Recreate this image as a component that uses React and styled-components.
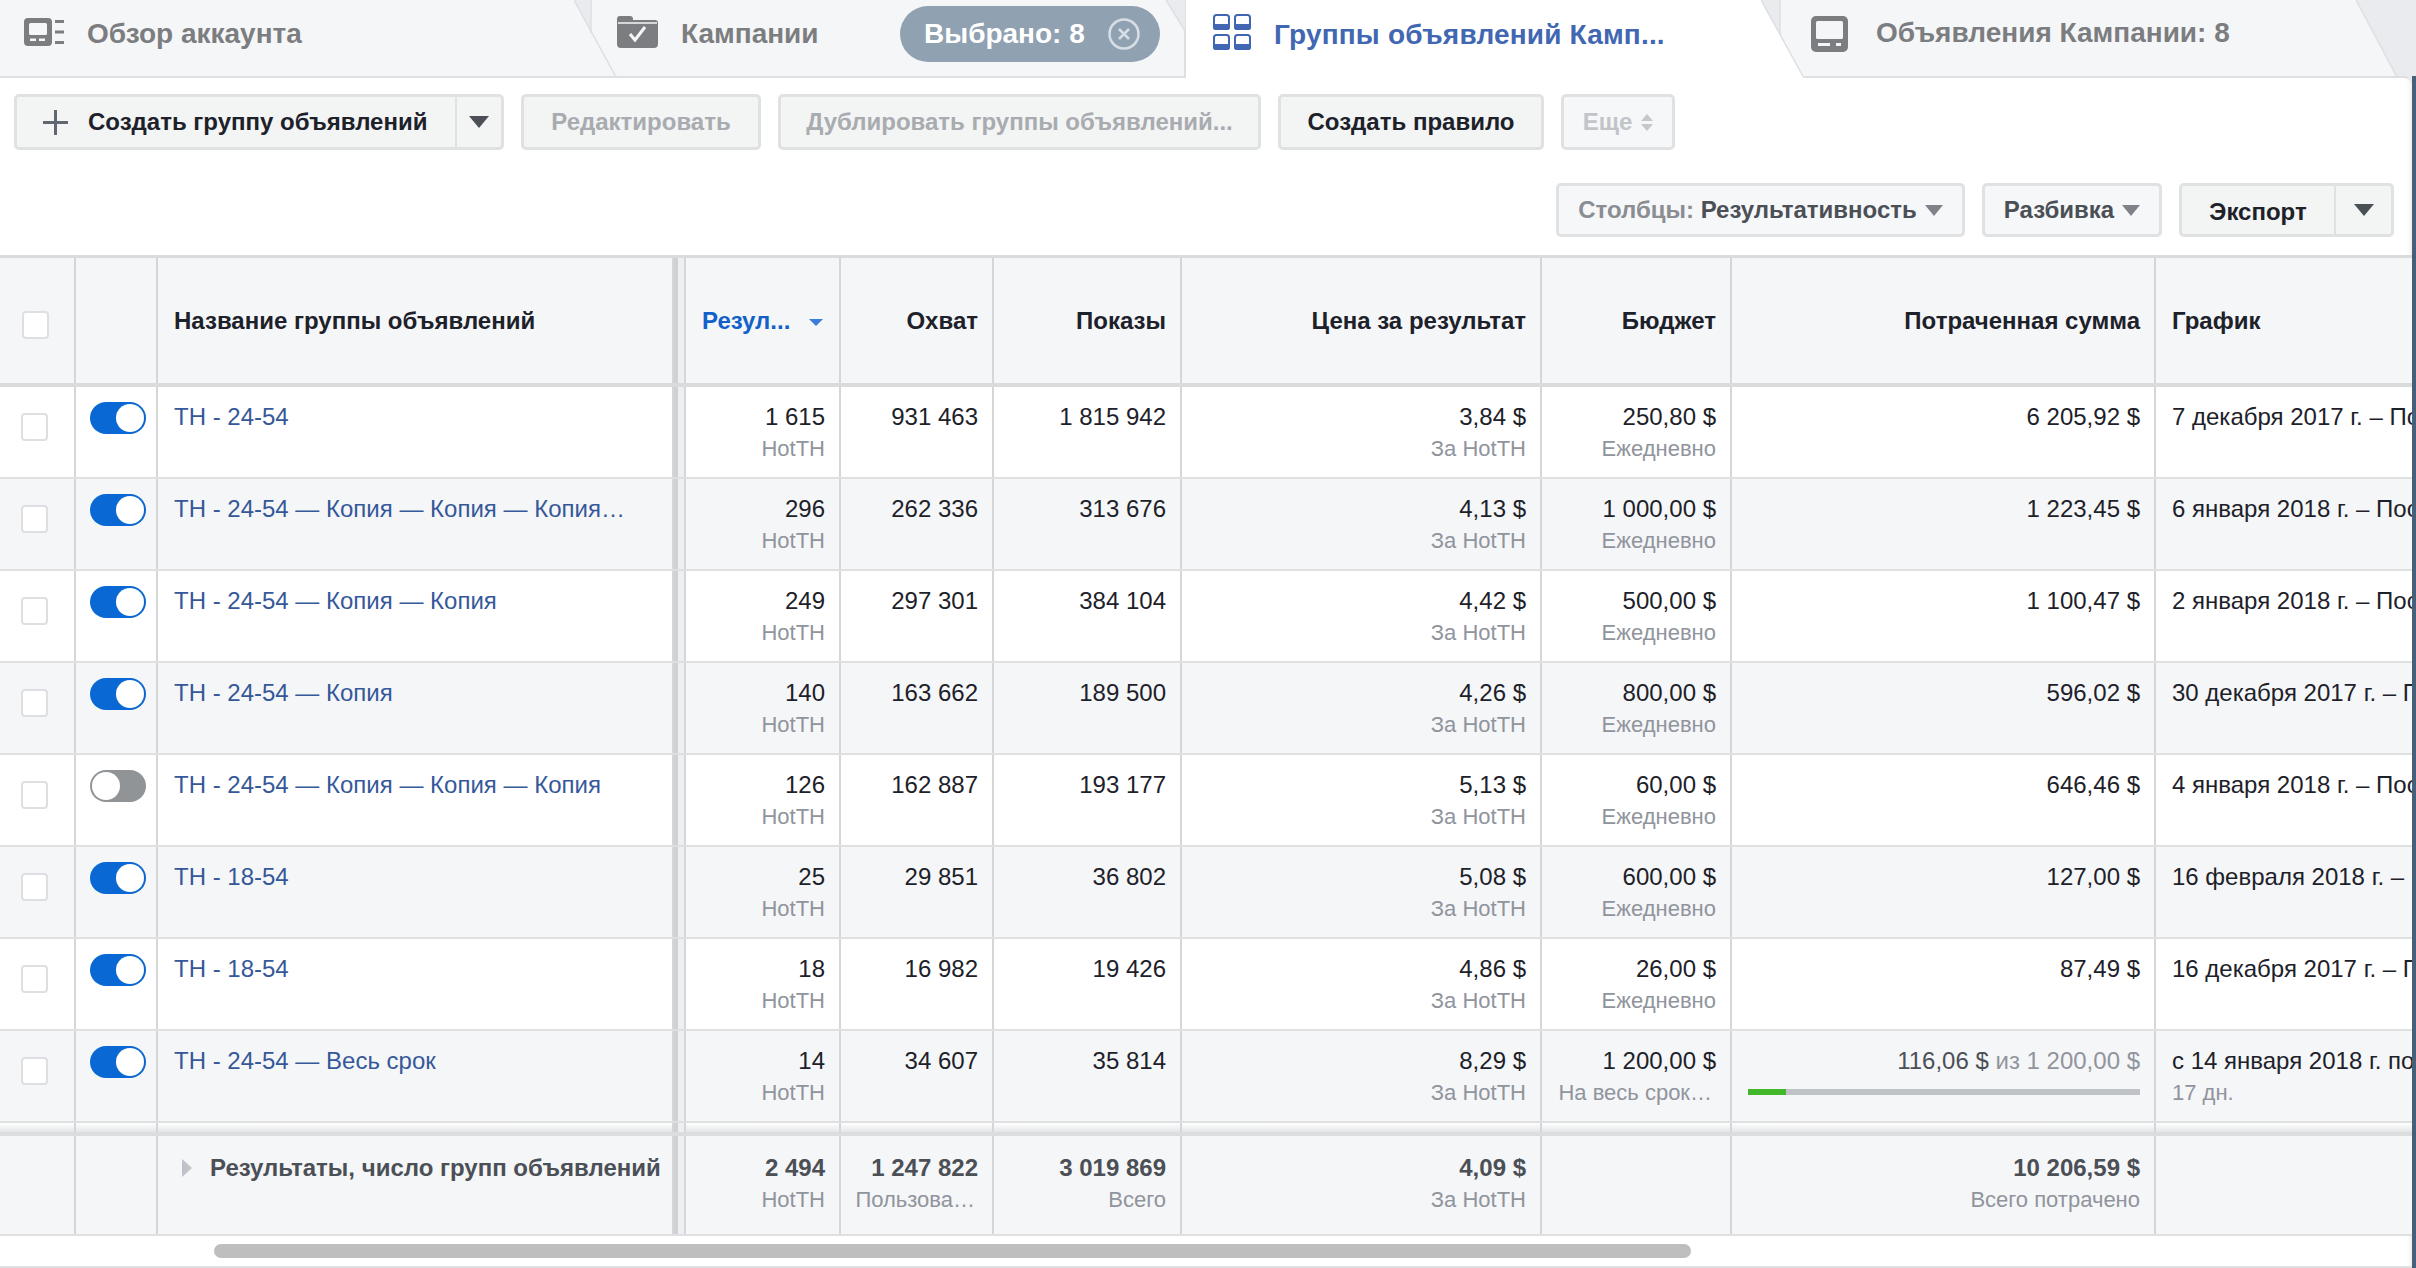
import React from "react";
import styled, { createGlobalStyle } from "styled-components";

const GlobalStyle = createGlobalStyle`
  html, body { margin: 0; padding: 0; background: #e9ebee; }
  body { font-family: "Liberation Sans", Arial, sans-serif; }
  * { box-sizing: border-box; }
`;

const COLUMNS = "76px 82px 516px 12px 155px 153px 188px 360px 190px 424px 256px";
const LINE = "#d4d6d9";
const FONT_SIZE = 24;
const TAB_GRAY = "#7c7d80";

const Page = styled.div`
  width: 2416px;
  height: 1268px;
  overflow: hidden;
  background: #e9ebee;
  display: flex;
  flex-direction: column;
`;

const TabBar = styled.div`
  display: flex;
  height: 76px;
  flex: none;
  position: relative;
  z-index: 2;
`;

const Tab = styled.div`
  position: relative;
  flex: none;
  width: ${(p) => p.$w}px;
  height: ${(p) => (p.$active ? 78 : 76)}px;
  background: ${(p) => (p.$active ? "#fff" : "#f5f6f7")};
  display: flex;
  align-items: center;
  padding-left: ${(p) => p.$pad}px;
  padding-bottom: ${(p) => p.$bottom || 8}px;
  gap: ${(p) => p.$gap || 23}px;
  border-right: ${(p) => (p.$edge ? "2px solid #dddfe2" : "none")};
`;

const TabLabel = styled.span`
  font-size: 28px;
  font-weight: 700;
  white-space: nowrap;
  letter-spacing: ${(p) => (p.$active ? "0.18px" : "0")};
  color: ${(p) => (p.$active ? "#4267b2" : TAB_GRAY)};
`;

const TabIcon = styled.svg`
  flex: none;
  margin-top: ${(p) => p.$shift || 0}px;
`;

const Pill = styled.div`
  margin-left: auto;
  margin-right: 24px;
  width: 260px;
  height: 56px;
  border-radius: 28px;
  background: #90a1b2;
  display: flex;
  align-items: center;
  justify-content: space-between;
  padding: 0 20px 0 24px;
  color: #fff;
  font-size: 28px;
  font-weight: 700;
  white-space: nowrap;
`;

const Slant = styled.svg`
  position: absolute;
  top: 0;
  left: ${(p) => p.$left}px;
  z-index: 3;
`;

const Body = styled.div`
  flex: 1;
  display: flex;
  min-height: 0;
`;

const Panel = styled.div`
  width: 2412px;
  flex: none;
  background: #fff;
  border-top: 2px solid #dddfe2;
  border-top-right-radius: 8px;
  box-shadow: inset -6px 0 6px -6px rgba(0, 0, 0, 0.12);
  overflow: hidden;
  display: flex;
  flex-direction: column;
`;

const Strip = styled.div`
  flex: 1;
  background: #46607a;
`;

const ToolbarA = styled.div`
  display: flex;
  align-items: center;
  gap: 17px;
  padding: 16px 0 0 14px;
  height: 72px;
  flex: none;
`;

const ToolbarB = styled.div`
  display: flex;
  justify-content: flex-end;
  align-items: center;
  gap: 17px;
  padding-right: 18px;
  margin-top: 33px;
  height: 54px;
  flex: none;
`;

const Button = styled.div`
  width: ${(p) => p.$w}px;
  height: ${(p) => p.$h || 56}px;
  flex: none;
  display: flex;
  align-items: center;
  justify-content: center;
  gap: ${(p) => p.$gap || 8}px;
  background: ${(p) => (p.$light ? "#f6f7f9" : "#f3f4f4")};
  border: 3px solid #dfe1e3;
  border-radius: 5px;
  font-size: ${FONT_SIZE}px;
  font-weight: 700;
  white-space: nowrap;
  color: ${(p) => p.$color || "#1d2129"};
`;

const SplitButton = styled(Button)`
  justify-content: flex-start;
  padding: 0;
  gap: 0;
`;

const SplitMain = styled.div`
  flex: 1;
  height: 100%;
  display: flex;
  align-items: center;
  justify-content: ${(p) => (p.$center ? "center" : "flex-start")};
  padding: ${(p) => (p.$center ? "4px 0 0" : "0 0 0 26px")};
  gap: 20px;
`;

const SplitArrow = styled.div`
  width: ${(p) => p.$w}px;
  height: 100%;
  flex: none;
  border-left: 2px solid #dfe1e3;
  display: flex;
  align-items: center;
  justify-content: center;
`;

const Caret = styled.span`
  display: inline-block;
  flex: none;
  width: 0;
  height: 0;
  margin-top: ${(p) => p.$shift || 0}px;
  border-left: ${(p) => p.$size || 10}px solid transparent;
  border-right: ${(p) => p.$size || 10}px solid transparent;
  border-top: ${(p) => p.$drop || 12}px solid ${(p) => p.$color || "#4b4f56"};
`;

const SortStack = styled.span`
  display: inline-flex;
  flex-direction: column;
  gap: 3px;
`;

const SortUp = styled.span`
  width: 0;
  height: 0;
  border-left: 6px solid transparent;
  border-right: 6px solid transparent;
  border-bottom: 7px solid #c4c7cb;
`;

const SortDown = styled(SortUp)`
  border-bottom: none;
  border-top: 7px solid #c4c7cb;
`;

const MutedLabel = styled.span`
  color: #8a8d91;
`;

const DarkLabel = styled.span`
  color: #4b4f56;
`;

const Table = styled.div`
  margin-top: 18px;
  flex: none;
  border-top: 3px solid #dadbdd;
  font-size: ${FONT_SIZE}px;
  color: #1d2129;
`;

const Row = styled.div`
  display: grid;
  grid-template-columns: ${COLUMNS};
  height: ${(p) => p.$h}px;
  background: ${(p) => (p.$gray ? "#f5f6f8" : "#fff")};
  border-top: ${(p) => (p.$band ? "4px solid #dcddde" : "none")};
  border-bottom: ${(p) => p.$rule || 2}px solid ${(p) => p.$ruleColor || "#dfe0e2"};
`;

const Cell = styled.div`
  min-width: 0;
  border-right: ${(p) => (p.$last ? "none" : `2px solid ${LINE}`)};
  overflow: hidden;
  white-space: nowrap;
  line-height: 32px;
  padding: ${(p) => p.$top ?? 14}px ${(p) => p.$right ?? 14}px 0 ${(p) => p.$left ?? 10}px;
  text-align: ${(p) => (p.$align === "left" ? "left" : "right")};
`;

const HeadCell = styled.div`
  min-width: 0;
  border-right: ${(p) => (p.$last ? "none" : `2px solid ${LINE}`)};
  display: flex;
  align-items: center;
  justify-content: ${(p) => (p.$align === "left" ? "flex-start" : "flex-end")};
  padding: 0 14px 0 16px;
  font-weight: 700;
  white-space: nowrap;
  color: ${(p) => p.$color || "#1d2129"};
  gap: 19px;
`;

const Splitter = styled.div`
  background: #eeeff1;
  border-left: 4px solid #cfd1d4;
  border-right: 2px solid ${LINE};
`;

const Value = styled.div`
  color: ${(p) => p.$color || "#1d2129"};
  font-weight: ${(p) => (p.$bold ? 700 : 400)};
`;

const Sub = styled.div`
  color: #90949c;
  font-size: 22px;
  padding-right: ${(p) => p.$inset || 0}px;
`;

const Faint = styled.span`
  color: #90949c;
`;

const NameLink = styled.span`
  color: #365899;
`;

const BoxCell = styled.div`
  border-right: 2px solid ${LINE};
  padding: ${(p) => p.$top}px 0 0 ${(p) => p.$left}px;
`;

const Check = styled.div`
  width: 27px;
  height: 28px;
  background: #fff;
  border: 2px solid #dddfe2;
  border-radius: 4px;
`;

const Toggle = styled.div`
  width: 56px;
  height: 32px;
  border-radius: 16px;
  background: ${(p) => (p.$on ? "#0a68d4" : "#909497")};
  padding: 2px;
  display: flex;
  justify-content: ${(p) => (p.$on ? "flex-end" : "flex-start")};
`;

const Knob = styled.div`
  width: 28px;
  height: 28px;
  border-radius: 50%;
  background: radial-gradient(circle, #fff 70%, #d7dbe6 100%);
`;

const Progress = styled.div`
  height: 6px;
  margin: 12px 0 0;
  background: #bfc3c7;
`;

const ProgressFill = styled.div`
  height: 100%;
  background: #42b72a;
`;

const GapCell = styled.div`
  border-right: ${(p) => (p.$last ? "none" : `2px solid ${LINE}`)};
`;

const GapRow = styled.div`
  display: grid;
  grid-template-columns: ${COLUMNS};
  height: 9px;
  background: linear-gradient(#ffffff, #e4e5e7);
`;

const FootName = styled.div`
  border-right: 2px solid ${LINE};
  display: flex;
  gap: 18px;
  padding: 16px 0 0 24px;
  line-height: 32px;
  font-weight: 700;
  color: #4b4f56;
  white-space: nowrap;
`;

const ExpandArrow = styled.span`
  flex: none;
  margin-top: 7px;
  width: 0;
  height: 0;
  border-top: 9px solid transparent;
  border-bottom: 9px solid transparent;
  border-left: 10px solid #bec3c9;
`;

const ScrollArea = styled.div`
  flex: none;
  height: 32px;
  padding: 8px 0 0 214px;
  border-bottom: 2px solid #dfe0e2;
`;

const ScrollThumb = styled.div`
  width: 1477px;
  height: 14px;
  border-radius: 7px;
  background: #bebebe;
`;

const AccountIcon = () => (
  <TabIcon $shift={-4} width="40" height="28" viewBox="0 0 40 28">
    <rect width="28" height="28" rx="4" fill={TAB_GRAY} />
    <rect x="5" y="5" width="18" height="12" rx="1.5" fill="#f5f6f7" />
    <rect x="6" y="20.5" width="6" height="2.5" fill="#f5f6f7" />
    <rect x="15" y="20.5" width="6" height="2.5" fill="#f5f6f7" />
    <rect x="31" y="2" width="9" height="3" fill={TAB_GRAY} />
    <rect x="31" y="12.5" width="9" height="3" fill={TAB_GRAY} />
    <rect x="31" y="23" width="9" height="3" fill={TAB_GRAY} />
  </TabIcon>
);

const FolderIcon = () => (
  <TabIcon $shift={-5} width="41" height="33" viewBox="0 0 41 33">
    <path
      d="M0 4 a3 3 0 0 1 3-3 h10 a3 3 0 0 1 3 3 v1 h22 a3 3 0 0 1 3 3 v21 a4 4 0 0 1-4 4 h-33 a4 4 0 0 1-4-4z"
      fill={TAB_GRAY}
    />
    <path d="M1 8 h39" stroke="#f5f6f7" strokeWidth="1.5" />
    <path d="M13 19 l5 6 l10-13" fill="none" stroke="#f5f6f7" strokeWidth="3" />
  </TabIcon>
);

const GroupsIcon = () => (
  <TabIcon $shift={-6} width="38" height="36" viewBox="0 0 38 36">
    {[
      [0, 0],
      [21, 0],
      [0, 20],
      [21, 20],
    ].map(([x, y]) => (
      <g key={`${x}-${y}`}>
        <rect x={x + 1} y={y + 1} width="15" height="14" rx="2.5" fill="#fff" stroke="#4267b2" strokeWidth="2" />
        <path d={`M${x} ${y + 10} h17 v3 a3 3 0 0 1-3 3 h-11 a3 3 0 0 1-3-3z`} fill="#4267b2" />
      </g>
    ))}
  </TabIcon>
);

const AdIcon = () => (
  <TabIcon $shift={2} width="37" height="36" viewBox="0 0 37 36">
    <rect width="37" height="36" rx="5" fill={TAB_GRAY} />
    <rect x="5" y="5" width="27" height="18" rx="1.5" fill="#f5f6f7" />
    <rect x="7" y="27" width="12" height="3" fill="#f5f6f7" />
    <rect x="25" y="27" width="5" height="3" fill="#f5f6f7" />
  </TabIcon>
);

const CloseIcon = () => (
  <TabIcon width="32" height="32" viewBox="0 0 32 32">
    <circle cx="16" cy="16" r="14.5" fill="none" stroke="#d7dee5" strokeWidth="2.5" />
    <path d="M11 11 L21 21 M21 11 L11 21" stroke="#d7dee5" strokeWidth="2.5" />
  </TabIcon>
);

const PlusIcon = () => (
  <TabIcon width="25" height="25" viewBox="0 0 25 25">
    <path d="M12.5 0 V25 M0 12.5 H25" stroke="#606770" strokeWidth="3" />
  </TabIcon>
);

const rows = [
  { name: "ТН - 24-54", res: "1 615", reach: "931 463", shows: "1 815 942", cost: "3,84 $", budget: "250,80 $", spent: "6 205,92 $", date: "7 декабря 2017 г. – Постоянно" },
  { name: "ТН - 24-54 — Копия — Копия — Копия…", res: "296", reach: "262 336", shows: "313 676", cost: "4,13 $", budget: "1 000,00 $", spent: "1 223,45 $", date: "6 января 2018 г. – Постоянно" },
  { name: "ТН - 24-54 — Копия — Копия", res: "249", reach: "297 301", shows: "384 104", cost: "4,42 $", budget: "500,00 $", spent: "1 100,47 $", date: "2 января 2018 г. – Постоянно" },
  { name: "ТН - 24-54 — Копия", res: "140", reach: "163 662", shows: "189 500", cost: "4,26 $", budget: "800,00 $", spent: "596,02 $", date: "30 декабря 2017 г. – Постоянно" },
  { name: "ТН - 24-54 — Копия — Копия — Копия", res: "126", reach: "162 887", shows: "193 177", cost: "5,13 $", budget: "60,00 $", spent: "646,46 $", date: "4 января 2018 г. – Постоянно", off: true },
  { name: "ТН - 18-54", res: "25", reach: "29 851", shows: "36 802", cost: "5,08 $", budget: "600,00 $", spent: "127,00 $", date: "16 февраля 2018 г. – Постоянно" },
  { name: "ТН - 18-54", res: "18", reach: "16 982", shows: "19 426", cost: "4,86 $", budget: "26,00 $", spent: "87,49 $", date: "16 декабря 2017 г. – Постоянно" },
  { name: "ТН - 24-54 — Весь срок", res: "14", reach: "34 607", shows: "35 814", cost: "8,29 $", budget: "1 200,00 $", budgetSub: "На весь срок…", lifetime: true, date: "с 14 января 2018 г. по 31 января 2018 г.", dateSub: "17 дн." },
];

const heads = ["Охват", "Показы", "Цена за результат", "Бюджет", "Потраченная сумма"];

export default function App() {
  return (
    <Page>
      <GlobalStyle />
      <TabBar>
        <Tab $w={591} $pad={24}>
          <AccountIcon />
          <TabLabel>Обзор аккаунта</TabLabel>
          <Slant $left={574} width="43" height="77" viewBox="0 0 43 77">
            <polygon points="0,0 17,0 17,33" fill="#e9ebee" />
            <line x1="0" y1="0" x2="42" y2="77" stroke="#dddfe2" strokeWidth="1.5" />
            <line x1="17" y1="0" x2="17" y2="33" stroke="#dddfe2" strokeWidth="1.5" />
          </Slant>
        </Tab>
        <Tab $w={595} $pad={26} $edge>
          <FolderIcon />
          <TabLabel>Кампании</TabLabel>
          <Pill>
            Выбрано: 8
            <CloseIcon />
          </Pill>
          <Slant $left={575} width="20" height="31" viewBox="0 0 20 31">
            <polygon points="0,0 19,0 19,31" fill="#e9ebee" />
            <line x1="0" y1="0" x2="19" y2="31" stroke="#dddfe2" strokeWidth="1.5" />
          </Slant>
        </Tab>
        <Tab $w={594} $pad={27} $active>
          <GroupsIcon />
          <TabLabel $active>Группы объявлений Камп...</TabLabel>
          <Slant $left={575} width="44" height="78" viewBox="0 0 44 78">
            <polygon points="0,0 19,0 19,34" fill="#e9ebee" />
            <polygon points="19,34 19,78 44,78" fill="#fff" />
            <line x1="0" y1="0" x2="43" y2="78" stroke="#dddfe2" strokeWidth="1.5" />
            <line x1="19" y1="0" x2="19" y2="34" stroke="#dddfe2" strokeWidth="1.5" />
          </Slant>
        </Tab>
        <Tab $w={617} $pad={31} $gap={28} $bottom={10}>
          <AdIcon />
          <TabLabel>Объявления Кампании: 8</TabLabel>
          <Slant $left={576} width="42" height="77" viewBox="0 0 42 77">
            <polygon points="0,0 41,0 41,77" fill="#e9ebee" />
            <line x1="0" y1="0" x2="41" y2="77" stroke="#dddfe2" strokeWidth="1.5" />
          </Slant>
        </Tab>
      </TabBar>
      <Body>
        <Panel>
          <ToolbarA>
            <SplitButton $w={490}>
              <SplitMain>
                <PlusIcon />
                Создать группу объявлений
              </SplitMain>
              <SplitArrow $w={46}>
                <Caret />
              </SplitArrow>
            </SplitButton>
            <Button $w={240} $color="#a8abaf">Редактировать</Button>
            <Button $w={483} $color="#a8abaf">Дублировать группы объявлений...</Button>
            <Button $w={266}>Создать правило</Button>
            <Button $w={114} $light $color="#c1c4c8" $gap={9}>
              Еще
              <SortStack>
                <SortUp />
                <SortDown />
              </SortStack>
            </Button>
          </ToolbarA>
          <ToolbarB>
            <Button $w={409} $h={54} $light>
              <span>
                <MutedLabel>Столбцы: </MutedLabel>
                <DarkLabel>Результативность</DarkLabel>
              </span>
              <Caret $size={9} $drop={11} $color="#7f8389" />
            </Button>
            <Button $w={180} $h={54} $light>
              <DarkLabel>Разбивка</DarkLabel>
              <Caret $size={9} $drop={11} $color="#7f8389" />
            </Button>
            <SplitButton $w={215} $h={54}>
              <SplitMain $center>Экспорт</SplitMain>
              <SplitArrow $w={57}>
                <Caret />
              </SplitArrow>
            </SplitButton>
          </ToolbarB>
          <Table>
            <Row $h={129} $gray $rule={4} $ruleColor="#dadbdd">
              <BoxCell $top={53} $left={22}>
                <Check />
              </BoxCell>
              <GapCell />
              <HeadCell $align="left">Название группы объявлений</HeadCell>
              <Splitter />
              <HeadCell $align="left" $color="#1261c9">
                Резул...
                <Caret $size={7} $drop={7} $shift={3} $color="#3b7ddd" />
              </HeadCell>
              {heads.map((label) => (
                <HeadCell key={label}>{label}</HeadCell>
              ))}
              <HeadCell $align="left" $last>График</HeadCell>
            </Row>
            {rows.map((r, i) => (
              <Row key={i} $h={92} $gray={i % 2 === 1}>
                <BoxCell $top={26} $left={21}>
                  <Check />
                </BoxCell>
                <BoxCell $top={15} $left={14}>
                  <Toggle $on={!r.off}>
                    <Knob />
                  </Toggle>
                </BoxCell>
                <Cell $align="left" $left={16}>
                  <NameLink>{r.name}</NameLink>
                </Cell>
                <Splitter />
                <Cell>
                  <Value>{r.res}</Value>
                  <Sub>HotTH</Sub>
                </Cell>
                <Cell>
                  <Value>{r.reach}</Value>
                </Cell>
                <Cell>
                  <Value>{r.shows}</Value>
                </Cell>
                <Cell>
                  <Value>{r.cost}</Value>
                  <Sub>За HotTH</Sub>
                </Cell>
                <Cell>
                  <Value>{r.budget}</Value>
                  <Sub $inset={r.budgetSub ? 4 : 0}>{r.budgetSub || "Ежедневно"}</Sub>
                </Cell>
                <Cell $left={16}>
                  {r.lifetime ? (
                    <>
                      <Value $color="#4b4f56">
                        116,06 $ <Faint>из 1 200,00 $</Faint>
                      </Value>
                      <Progress>
                        <ProgressFill style={{ width: `${(116.06 / 1200) * 100}%` }} />
                      </Progress>
                    </>
                  ) : (
                    <Value>{r.spent}</Value>
                  )}
                </Cell>
                <Cell $align="left" $left={16} $right={0} $last>
                  <Value>{r.date}</Value>
                  {r.dateSub && <Sub>{r.dateSub}</Sub>}
                </Cell>
              </Row>
            ))}
            <GapRow>
              {Array.from({ length: 11 }, (_, i) =>
                i === 3 ? <Splitter key={i} /> : <GapCell key={i} $last={i === 10} />
              )}
            </GapRow>
            <Row $h={104} $gray $band>
              <GapCell />
              <GapCell />
              <FootName>
                <ExpandArrow />
                Результаты, число групп объявлений
              </FootName>
              <Splitter />
              <Cell $top={16}>
                <Value $bold $color="#4b4f56">2 494</Value>
                <Sub>HotTH</Sub>
              </Cell>
              <Cell $top={16}>
                <Value $bold $color="#4b4f56">1 247 822</Value>
                <Sub $inset={3}>Пользова…</Sub>
              </Cell>
              <Cell $top={16}>
                <Value $bold $color="#4b4f56">3 019 869</Value>
                <Sub>Всего</Sub>
              </Cell>
              <Cell $top={16}>
                <Value $bold $color="#4b4f56">4,09 $</Value>
                <Sub>За HotTH</Sub>
              </Cell>
              <GapCell />
              <Cell $top={16}>
                <Value $bold $color="#4b4f56">10 206,59 $</Value>
                <Sub>Всего потрачено</Sub>
              </Cell>
              <GapCell $last />
            </Row>
          </Table>
          <ScrollArea>
            <ScrollThumb />
          </ScrollArea>
        </Panel>
        <Strip />
      </Body>
    </Page>
  );
}
